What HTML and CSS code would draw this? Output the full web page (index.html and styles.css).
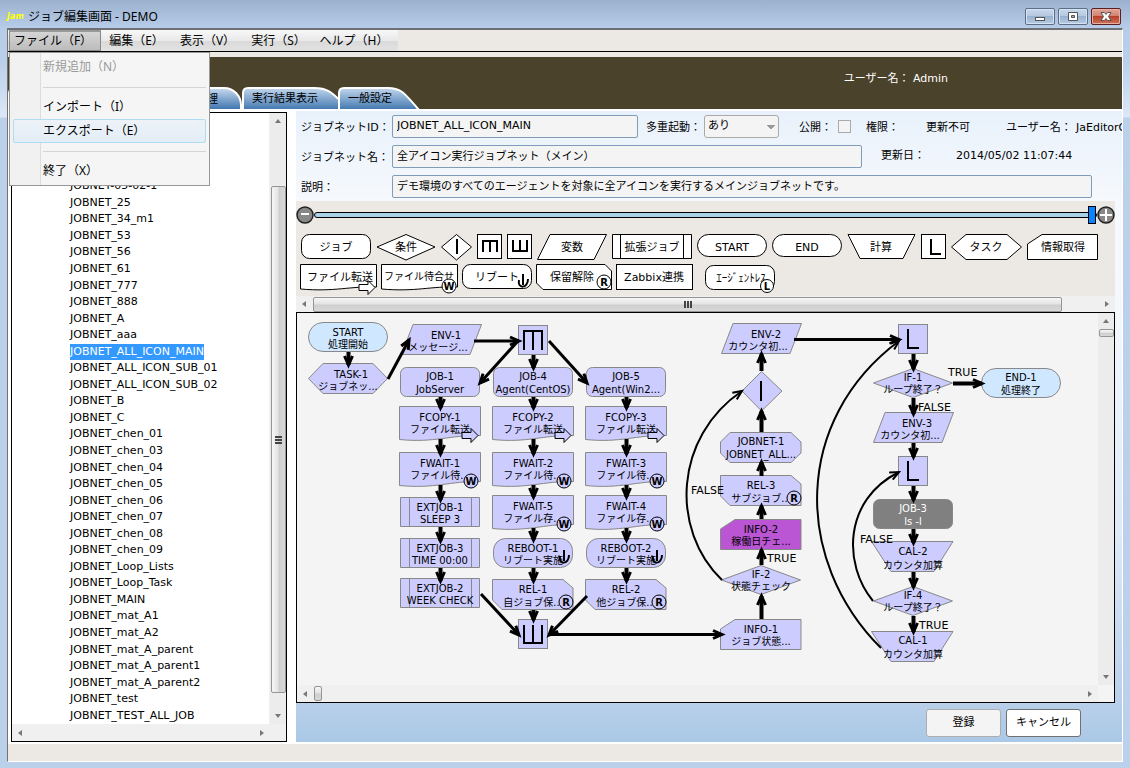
FILE: index.html
```html
<!DOCTYPE html>
<html lang="ja">
<head>
    <meta charset="UTF-8">
    <meta name="viewport" content="width=device-width, initial-scale=1.0">
    <title>ジョブ編集画面 - DEMO</title>
    <link rel="stylesheet" href="styles.css">
</head>
<body>
    <header class="titlebar">
        <span class="app-icon">Jam</span>
        <h1>ジョブ編集画面 - DEMO</h1>
        <div class="window-buttons">
            <button type="button" aria-label="最小化"><svg width="12" height="12"><rect x="1.5" y="6.5" width="9" height="3" fill="#fff" stroke="#555"/></svg></button>
            <button type="button" aria-label="最大化"><svg width="12" height="12"><path d="M1.5 1.5h9v8h-9zM4.5 4.5v2h3v-2z" fill="#fff" fill-rule="evenodd" stroke="#555"/></svg></button>
            <button type="button" class="close" aria-label="閉じる"><svg width="12" height="12"><path d="M1 1.500H4.500L6 3.500L7.500 1.500H11L8.500 5.500L11 9.500H7.500L6 7.500L4.500 9.500H1L3.500 5.500z" fill="#fff" stroke="#555"/></svg></button>
        </div>
    </header>

    <div class="client">
        <nav class="menubar">
            <div class="menu-items">
                <button type="button" class="open">ファイル（F）</button>
                <button type="button">編集（E）</button>
                <button type="button">表示（V）</button>
                <button type="button">実行（S）</button>
                <button type="button">ヘルプ（H）</button>
            </div>
            <div class="dropdown">
                <button type="button" disabled>新規追加（N）</button>
                <hr>
                <button type="button">インポート（I）</button>
                <button type="button" class="hover">エクスポート（E）</button>
                <hr>
                <button type="button">終了（X）</button>
            </div>
        </nav>

        <div class="banner">
            <div class="user">ユーザー名： Admin</div>
            <div class="tabs">
                <button type="button" class="tab tab-first">管理</button>
                <button type="button" class="tab">
                    <svg width="118" height="22">
                        <defs><linearGradient id="tab-fill" x2="0" y2="1"><stop offset="0" stop-color="#c3d7ed"/><stop offset="1" stop-color="#4076af"/></linearGradient></defs>
                        <path class="tab-shape" d="M1 23V6Q1 1 6 1H72C90 1 92 9 108 23"/>
                    </svg>
                    <span>実行結果表示</span>
                </button>
                <button type="button" class="tab tab-last">
                    <svg width="84" height="22"><path class="tab-shape" d="M1 23V6Q1 1 6 1H50C64 1 67 7 81 23"/></svg>
                    <span>一般設定</span>
                </button>
            </div>
        </div>

        <main class="workspace">
            <section class="tree">
                <div class="tree-body">
                    <ul>
                        <li>JOBNET-05-02-1</li>
                        <li>JOBNET_25</li>
                        <li>JOBNET_34_m1</li>
                        <li>JOBNET_53</li>
                        <li>JOBNET_56</li>
                        <li>JOBNET_61</li>
                        <li>JOBNET_777</li>
                        <li>JOBNET_888</li>
                        <li>JOBNET_A</li>
                        <li>JOBNET_aaa</li>
                        <li class="selected"><span>JOBNET_ALL_ICON_MAIN</span></li>
                        <li>JOBNET_ALL_ICON_SUB_01</li>
                        <li>JOBNET_ALL_ICON_SUB_02</li>
                        <li>JOBNET_B</li>
                        <li>JOBNET_C</li>
                        <li>JOBNET_chen_01</li>
                        <li>JOBNET_chen_03</li>
                        <li>JOBNET_chen_04</li>
                        <li>JOBNET_chen_05</li>
                        <li>JOBNET_chen_06</li>
                        <li>JOBNET_chen_07</li>
                        <li>JOBNET_chen_08</li>
                        <li>JOBNET_chen_09</li>
                        <li>JOBNET_Loop_Lists</li>
                        <li>JOBNET_Loop_Task</li>
                        <li>JOBNET_MAIN</li>
                        <li>JOBNET_mat_A1</li>
                        <li>JOBNET_mat_A2</li>
                        <li>JOBNET_mat_A_parent</li>
                        <li>JOBNET_mat_A_parent1</li>
                        <li>JOBNET_mat_A_parent2</li>
                        <li>JOBNET_test</li>
                        <li>JOBNET_TEST_ALL_JOB</li>
                    </ul>
                </div>
                <div class="vscroll tree-v"><i class="arrow up"></i><div class="thumb"><i class="grip"></i></div><i class="arrow down"></i></div>
                <div class="hscroll"><i class="arrow left"></i><i class="arrow right"></i></div>
            </section>

            <section class="editor">
                <form class="props">
                    <div class="row">
                        <label class="name" for="jobnet-id">ジョブネットID：</label>
                        <input type="text" id="jobnet-id" class="id-box" value="JOBNET_ALL_ICON_MAIN">
                        <label class="multi" for="multi">多重起動：</label>
                        <select id="multi"><option>あり</option></select>
                        <label class="public" for="public">公開：</label>
                        <input type="checkbox" id="public" disabled>
                        <span class="auth">権限：</span>
                        <span class="auth-value">更新不可</span>
                        <span class="owner">ユーザー名：</span>
                        <span class="owner-value">JaEditorG</span>
                    </div>
                    <div class="row">
                        <label class="name" for="jobnet-name">ジョブネット名：</label>
                        <input type="text" id="jobnet-name" class="name-box" value="全アイコン実行ジョブネット（メイン）">
                        <span class="updated">更新日：</span>
                        <span>2014/05/02 11:07:44</span>
                    </div>
                    <div class="row">
                        <label class="name" for="memo">説明：</label>
                        <input type="text" id="memo" class="memo-box" value="デモ環境のすべてのエージェントを対象に全アイコンを実行するメインジョブネットです。">
                    </div>
                </form>

                <div class="palette">
                    <div class="zoom">
                        <button type="button" aria-label="縮小"><svg width="18" height="18"><circle cx="9" cy="9" r="8" fill="#888" stroke="#222" stroke-width="1.500"/><path d="M5 8h8" stroke="#fff" stroke-width="2"/></svg></button>
                        <input type="range" min="0" max="100" value="100" aria-label="ズーム">
                        <button type="button" aria-label="拡大"><svg width="18" height="18"><circle cx="9" cy="9" r="8" fill="#888" stroke="#222" stroke-width="1.500"/><path d="M3 9h12M9 3v12" stroke="#fff" stroke-width="2"/></svg></button>
                    </div>
                    <div class="tools">
                        <button type="button"><svg width="70" height="26"><rect x=".5" y=".5" width="69" height="24" rx="8"/><text x="35" y="17">ジョブ</text></svg></button>
                        <button type="button"><svg width="60" height="27"><path d="M1 13L30 .5L59 13L30 26z"/><text x="30" y="17">条件</text></svg></button>
                        <button type="button" aria-label="合流"><svg width="31" height="27"><path d="M.5 13L15.500 .5L30.500 13L15.500 26z"/><path class="mark" d="M16 5v15"/></svg></button>
                        <button type="button" aria-label="並行開始"><svg width="25" height="26"><rect x=".5" y=".5" width="24" height="24"/><path class="mark" d="M6 18V7h14v11M13 7v11"/></svg></button>
                        <button type="button" aria-label="並行終了"><svg width="25" height="26"><rect x=".5" y=".5" width="24" height="24"/><path class="mark" d="M6 6v11h14V6M13 6v11"/></svg></button>
                        <button type="button"><svg width="70" height="27"><path d="M13 .5H69.500L57 25.500H.5z"/><text x="35" y="17">変数</text></svg></button>
                        <button type="button"><svg width="80" height="26"><path d="M.5 .5h79v24H.5zM8.500 .5v24M71.500 .5v24"/><text x="40" y="17">拡張ジョブ</text></svg></button>
                        <button type="button"><svg width="70" height="26"><rect x=".5" y=".5" width="69" height="22" rx="11"/><text x="35" y="17">START</text></svg></button>
                        <button type="button"><svg width="70" height="26"><rect x=".5" y=".5" width="69" height="22" rx="11"/><text x="35" y="17">END</text></svg></button>
                        <button type="button"><svg width="69" height="26"><path d="M1 .5H68L56 24.500H13z"/><text x="34" y="17">計算</text></svg></button>
                        <button type="button" aria-label="ループ"><svg width="25" height="26"><rect x=".5" y=".5" width="24" height="24"/><path class="mark" d="M10 5v15h10"/></svg></button>
                        <button type="button"><svg width="71" height="27"><path d="M.5 13L15 .5H56L70.500 13L56 25.500H15z"/><text x="35" y="17">タスク</text></svg></button>
                        <button type="button"><svg width="71" height="27"><path d="M15 .5H70.500V25.500H.5V10z"/><text x="36" y="17">情報取得</text></svg></button>
                    </div>
                    <div class="tools second">
                        <button type="button"><svg width="77" height="31"><path d="M.5 .5H76.500V23C50 22 35 28 .5 25z"/><text x="40" y="17">ファイル転送</text><use href="#b-arrow" x="58" y="16"/></svg></button>
                        <button type="button"><svg width="77" height="31"><path d="M.5 .5H76.500V23C50 22 35 28 .5 25z"/><text class="small" x="38" y="16">ファイル待合せ</text><use href="#b-w" x="68" y="22"/></svg></button>
                        <button type="button"><svg width="70" height="31"><rect x=".5" y=".5" width="69" height="24" rx="8"/><text x="35" y="17">リブート</text><use href="#b-power" x="61" y="18"/></svg></button>
                        <button type="button"><svg width="76" height="31"><path d="M.5 .5H69L75.500 7V25.500H7L.5 19z"/><text x="36" y="17">保留解除</text><use href="#b-r" x="68" y="18"/></svg></button>
                        <button type="button"><svg width="77" height="31"><rect x=".5" y=".5" width="76" height="25"/><text x="38" y="17">Zabbix連携</text></svg></button>
                        <button type="button" class="agentless"><svg width="71" height="31"><rect x=".5" y="1.500" width="69" height="24" rx="8"/><text x="36" y="18">ｴｰｼﾞｪﾝﾄﾚｽ</text><use href="#b-l" x="62" y="22"/></svg></button>
                    </div>
                    <div class="hscroll palette-h"><i class="arrow left"></i><div class="thumb"><i class="grip"></i></div><i class="arrow right"></i></div>
                </div>

                <div class="canvas">
                    <div class="canvas-view">
                    <svg class="flow" width="801" height="371" viewBox="297 313 801 371">
                        <defs>
                            <marker id="head" markerUnits="userSpaceOnUse" markerWidth="14" markerHeight="14" refX="10" refY="7" orient="auto"><path d="M1 3L10 7L1 11" fill="none" stroke="#000" stroke-width="3"/></marker>
                            <marker id="head-light" markerUnits="userSpaceOnUse" markerWidth="14" markerHeight="14" refX="10" refY="7" orient="auto"><path d="M1 3L10 7L1 11" fill="none" stroke="#000" stroke-width="2"/></marker>
                            <rect id="n-end" x=".5" y=".5" width="79" height="29" rx="14.500"/>
                            <rect id="n-job" x=".5" y=".5" width="79" height="29" rx="6"/>
                            <rect id="n-reboot" x=".5" y=".5" width="79" height="29" rx="12"/>
                            <rect id="n-box" x=".5" y=".5" width="29" height="29"/>
                            <path id="n-task" d="M.5 15.500L15 .5H65L79.500 15.500L65 30.500H15z"/>
                            <path id="n-env" d="M12 .5H80.500L69 30.500H.5z"/>
                            <path id="n-file" d="M.5 .5H81.500V29.500C50 29 36 37 .5 33.500z"/>
                            <path id="n-ext" d="M.5 .5h79v29H.5zM9.500 .5v29M71.500 .5v29"/>
                            <path id="n-rel" d="M.5 .5H71L81 9V30.500H10L.5 21z"/>
                            <path id="n-net" d="M10 .5H71L81 10V21L71 30.500H10L.5 21V10z"/>
                            <path id="n-info" d="M15 .5H81V30.500H.5V10z"/>
                            <path id="n-if" d="M.5 15L40 .5L79.500 15L40 29.500z"/>
                            <path id="n-cal" d="M.5 .5H82L63 30.500H20z"/>
                            <path id="b-arrow" class="badge" d="M1 4.500H10V.5L17 7.500L10 14.500V10.500H1z"/>
                            <g id="b-w" class="badge"><circle r="7"/><text y="4">W</text></g>
                            <g id="b-r" class="badge"><circle r="7"/><text y="4">R</text></g>
                            <g id="b-l" class="badge"><circle r="6.500"/><text y="4">L</text></g>
                            <path id="b-power" class="power" d="M-4 -2C-6 7 5 7 5 -3M0 -8V3"/>
                        </defs>

                        <g fill="#ccf" stroke="#888">
                            <g fill="#d0e8ff"><use href="#n-end" x="308" y="322"/><use href="#n-end" x="981" y="368"/></g>
                            <use href="#n-task" x="308" y="363"/>
                            <use href="#n-env" x="401" y="324"/><use href="#n-env" x="721" y="323"/><use href="#n-env" x="873" y="412"/>
                            <use href="#n-box" x="518" y="325"/><use href="#n-box" x="518" y="619"/><use href="#n-box" x="898" y="324"/><use href="#n-box" x="898" y="456"/>
                            <use href="#n-job" x="400" y="367"/><use href="#n-job" x="493" y="367"/><use href="#n-job" x="586" y="367"/>
                            <use href="#n-file" x="399" y="406"/><use href="#n-file" x="492" y="406"/><use href="#n-file" x="585" y="406"/>
                            <use href="#n-file" x="399" y="452"/><use href="#n-file" x="492" y="452"/><use href="#n-file" x="585" y="452"/>
                            <use href="#n-file" x="492" y="495"/><use href="#n-file" x="585" y="495"/>
                            <use href="#n-ext" x="400" y="497"/><use href="#n-ext" x="400" y="538"/><use href="#n-ext" x="400" y="578"/>
                            <use href="#n-reboot" x="493" y="538"/><use href="#n-reboot" x="586" y="538"/>
                            <use href="#n-rel" x="492" y="579"/><use href="#n-rel" x="585" y="579"/><use href="#n-rel" x="720" y="475"/>
                            <path d="M761.500 371.500L782 391L761.500 411L742 391z"/>
                            <use href="#n-net" x="720" y="432"/>
                            <use href="#n-info" x="720" y="519" fill="#ba55d3"/><use href="#n-info" x="720" y="619"/>
                            <use href="#n-if" x="721" y="565"/><use href="#n-if" x="873" y="368"/><use href="#n-if" x="873" y="586"/>
                            <use href="#n-job" x="873" y="499" fill="#808080"/>
                            <use href="#n-cal" x="871" y="541"/><use href="#n-cal" x="871" y="631"/>
                        </g>

                        <g class="glyph">
                            <path d="M524 350V331H542V350M533 331V350"/>
                            <path d="M524 625V643H542V625M533 625V643"/>
                            <path d="M761 381V401"/>
                            <path d="M908 329V348H919"/>
                            <path d="M908 461V480H919"/>
                        </g>

                        <g class="edges">
                            <path d="M388 379L409 340"/>
                            <path d="M474 341H519"/>
                            <path d="M518 341L480 383"/>
                            <path d="M549 341L587 383"/>
                            <path d="M481 594L519 635"/>
                            <path d="M587 596L549 635"/>
                            <path d="M549 634.500H722"/>
                            <path d="M794 339.500H899"/>
                            <g class="steps">
                                <path d="M348.500 352V365"/>
                                <path d="M533.500 355V368"/>
                                <path d="M440.500 397V408"/><path d="M533.500 397V408"/><path d="M626.500 397V408"/>
                                <path d="M440.500 439V454"/><path d="M533.500 439V454"/><path d="M626.500 439V454"/>
                                <path d="M440.500 485V500"/><path d="M533.500 485V497"/><path d="M626.500 485V497"/>
                                <path d="M440.500 527V541"/><path d="M533.500 528V540"/><path d="M626.500 528V540"/>
                                <path d="M440.500 568V581"/><path d="M533.500 568V581"/><path d="M626.500 568V581"/>
                                <path d="M533.500 610V620"/>
                                <path d="M761.500 619V596"/><path d="M761.500 565V550"/><path d="M761.500 519V506"/><path d="M761.500 476V462"/><path d="M761.500 432V411"/><path d="M761.500 371V354"/>
                                <path d="M913.500 354V369"/><path d="M913.500 398V414"/><path d="M913.500 443V457"/><path d="M913.500 486V500"/><path d="M913.500 529V543"/><path d="M913.500 572V587"/><path d="M913.500 616V632"/>
                                <path d="M953 383.500H982"/>
                            </g>
                            <g class="curve">
                                <path d="M722 580C670 530 674 437 742 391"/>
                                <path d="M881 648C793 560 793 420 899 341"/>
                                <path d="M873 601C843 565 843 500 899 472"/>
                            </g>
                        </g>

                        <g class="labels">
                            <text x="348" y="336">START</text><text x="348" y="348">処理開始</text>
                            <text x="351" y="378">TASK-1</text><text x="348" y="390">ジョブネッ...</text>
                            <text x="446" y="339">ENV-1</text><text x="438" y="351">メッセージ...</text>
                            <text x="440" y="380">JOB-1</text><text x="440" y="393">JobServer</text>
                            <text x="533" y="380">JOB-4</text><text x="533" y="393">Agent(CentOS)</text>
                            <text x="626" y="380">JOB-5</text><text x="626" y="393">Agent(Win2...</text>
                            <text x="440" y="421">FCOPY-1</text><text x="440" y="433">ファイル転送</text>
                            <text x="533" y="421">FCOPY-2</text><text x="533" y="433">ファイル転送</text>
                            <text x="626" y="421">FCOPY-3</text><text x="626" y="433">ファイル転送</text>
                            <text x="440" y="467">FWAIT-1</text><text x="440" y="479">ファイル待...</text>
                            <text x="533" y="467">FWAIT-2</text><text x="533" y="479">ファイル待...</text>
                            <text x="626" y="467">FWAIT-3</text><text x="626" y="479">ファイル待...</text>
                            <text x="533" y="510">FWAIT-5</text><text x="533" y="522">ファイル存...</text>
                            <text x="626" y="510">FWAIT-4</text><text x="626" y="522">ファイル存...</text>
                            <text x="440" y="511">EXTJOB-1</text><text x="440" y="523">SLEEP 3</text>
                            <text x="440" y="552">EXTJOB-3</text><text x="440" y="564">TIME 00:00</text>
                            <text x="440" y="592">EXTJOB-2</text><text x="440" y="604">WEEK CHECK</text>
                            <text x="533" y="552">REBOOT-1</text><text x="533" y="564">リブート実施</text>
                            <text x="626" y="552">REBOOT-2</text><text x="626" y="564">リブート実施</text>
                            <text x="533" y="593">REL-1</text><text x="533" y="606">自ジョブ保...</text>
                            <text x="626" y="593">REL-2</text><text x="626" y="606">他ジョブ保...</text>
                            <text x="766" y="338">ENV-2</text><text x="758" y="350">カウンタ初...</text>
                            <text x="761" y="445">JOBNET-1</text><text x="761" y="458">JOBNET_ALL...</text>
                            <text x="761" y="489">REL-3</text><text x="761" y="502">サブジョブ...</text>
                            <text x="761" y="533">INFO-2</text><text x="761" y="545">稼働日チェ...</text>
                            <text x="761" y="578">IF-2</text><text x="761" y="590">状態チェック</text>
                            <text x="761" y="633">INFO-1</text><text x="761" y="645">ジョブ状態...</text>
                            <text x="913" y="381">IF-1</text><text x="913" y="393">ループ終了？</text>
                            <text x="1021" y="381">END-1</text><text x="1021" y="394">処理終了</text>
                            <text x="917" y="427">ENV-3</text><text x="910" y="439">カウンタ初...</text>
                            <g fill="#fff"><text x="913" y="512">JOB-3</text><text x="913" y="525">ls -l</text></g>
                            <text x="913" y="555">CAL-2</text><text x="913" y="569">カウンタ加算</text>
                            <text x="913" y="599">IF-4</text><text x="913" y="611">ループ終了？</text>
                            <text x="913" y="644">CAL-1</text><text x="913" y="658">カウンタ加算</text>
                        </g>

                        <g class="branches">
                            <text x="948" y="376">TRUE</text>
                            <text x="918" y="411">FALSE</text>
                            <text x="691" y="494">FALSE</text>
                            <text x="767" y="562">TRUE</text>
                            <text x="860" y="543">FALSE</text>
                            <text x="919" y="629">TRUE</text>
                        </g>

                        <g fill="#ccf">
                            <use href="#b-arrow" x="461" y="428"/><use href="#b-arrow" x="554" y="428"/><use href="#b-arrow" x="647" y="428"/>
                            <use href="#b-w" x="471" y="481"/><use href="#b-w" x="564" y="481"/><use href="#b-w" x="657" y="481"/>
                            <use href="#b-w" x="564" y="524"/><use href="#b-w" x="657" y="524"/>
                            <use href="#b-power" x="564" y="558"/><use href="#b-power" x="657" y="558"/>
                            <use href="#b-r" x="566" y="602"/><use href="#b-r" x="659" y="602"/><use href="#b-r" x="794" y="498"/>
                        </g>
                    </svg>
                    </div>
                    <div class="vscroll canvas-v"><i class="arrow up"></i><div class="thumb"></div><i class="arrow down"></i></div>
                    <div class="hscroll canvas-h"><i class="arrow left"></i><div class="thumb"></div><i class="arrow right"></i></div>
                </div>

                <div class="actions">
                    <button type="button" class="save">登録</button>
                    <button type="button">キャンセル</button>
                </div>
            </section>
        </main>

        <footer class="statusbar"></footer>
    </div>
</body>
</html>
```
FILE: styles.css
```css
* { box-sizing: border-box; }
body { display: flex; flex-direction: column; height: 100vh; margin: 0; padding: 0 7px 6px; overflow: hidden; font: 11px/14px "DejaVu Sans", "Noto Sans CJK JP", sans-serif; color: #000; background: linear-gradient(#9bb1cd 0, #b6cce8 28px, #b9cfea 60px, #dce8f6 117px, #bbd0e9 118px, #bbd0eb); }
button { padding: 0; border: 0; background: none; font: inherit; color: inherit; }
svg { display: block; }

/* title bar */
.titlebar { display: flex; align-items: center; height: 28px; padding: 5px 2px 0 0; flex: none; }
.titlebar h1 { flex: 1; margin: 0; font: 12px/18px "Noto Sans", "Noto Sans CJK JP", sans-serif; }
.app-icon { width: 21px; font-size: 8px; font-style: italic; font-weight: bold; color: #ff0; }
.window-buttons { display: flex; gap: 3px; }
.window-buttons button { display: flex; align-items: center; justify-content: center; width: 30px; height: 17px; border: 1px solid #5b7088; border-radius: 2px; background: linear-gradient(#c9d8ea 0, #b5c9e0 45%, #98b1cf 50%, #b7cce4); box-shadow: inset 0 0 0 1px #d6e3f2; }
.window-buttons .close { border-color: #5a1f1f; background: linear-gradient(#e3a598 0, #d38370 45%, #b8412a 50%, #cf7356); box-shadow: inset 0 0 0 1px #e6b0a2; }

.client { display: flex; flex: 1; flex-direction: column; min-height: 0; border: 1px solid #fff; border-top: 2px solid #6c7076; border-left-color: #77716a; background: #ece9e4; }

/* menu */
.menubar { position: relative; height: 22px; margin-bottom: 5px; border-bottom: 1px solid #000; flex: none; font: 12px/18px "Noto Sans", "Noto Sans CJK JP", sans-serif; }
.menu-items { display: flex; width: 390px; height: 21px; padding-left: 1px; background: linear-gradient(#f8f8f8, #e9e9e9 50%, #dadada 55%, #e2e2e2); }
.menu-items button { width: 71px; text-align: center; }
.menu-items button:last-child { width: 80px; }
.menu-items .open { width: 92px; padding-right: 4px; border: 1px solid #888; border-top: 2px solid #999; background: linear-gradient(#d5d5d5, #bcbcbc); }
.dropdown { position: absolute; z-index: 5; top: 22px; left: 1px; width: 201px; padding: 2px 3px; border: 1px solid #979797; background: linear-gradient(90deg, #f1f1f1 30px, #ddd 30px, #ddd 31px, #f5f5f5 31px); }
.dropdown button { display: block; width: 100%; height: 24px; padding-left: 29px; border: 1px solid transparent; border-radius: 2px; text-align: left; }
.dropdown button:disabled { color: #999; }
.dropdown .hover { border-color: #aedcf2; background: linear-gradient(#eef2f8, #e3edf6); }
.dropdown hr { height: 1px; margin: 8px 0 7px 30px; border: 0; background: #d5d5d5; }

/* banner and tabs */
.banner { display: flex; flex-direction: column; justify-content: space-between; height: 52px; padding-top: 15px; background: #4b422b; color: #fff; flex: none; }
.user { width: 940px; text-align: right; }
.tabs { display: flex; height: 22px; color: #000; }
.tab { position: relative; width: 96px; padding-top: 2px; text-align: left; }
.tab svg { position: absolute; top: 0; left: 0; }
.tab span { position: relative; padding-left: 10px; }
.tab-first { width: 234px; padding-right: 22px; border: 2px solid #fff; border-bottom: 0; border-radius: 6px 18px 0 0; text-align: right; background: linear-gradient(#c3d7ed, #4076af); }
.tab-last { width: 84px; }
.tab-shape { fill: url(#tab-fill); stroke: #fff; stroke-width: 2; }

.workspace { display: flex; flex: 1; gap: 9px; min-height: 0; padding: 2px 0 2px 3px; background: #fff; }

/* jobnet tree */
.tree { display: grid; grid-template: 1fr 17px / 1fr 16px; flex: none; width: 276px; margin-top: 1px; border: 1px solid #000; background: linear-gradient(#fff, #fff) 0 0 / 257px 100% no-repeat, #f0f0f0; }
.tree-body { display: flex; min-height: 0; padding-top: 65px; }
.tree ul { display: flex; flex: 1; flex-direction: column; margin: 0; padding: 0 0 0 58px; list-style: none; }
.tree li { display: flex; flex: 1; align-items: center; white-space: nowrap; }
.selected span { padding: 1px 0; background: #39f; color: #fff; }

/* scroll bars */
.vscroll, .hscroll { display: flex; align-items: center; justify-content: space-between; background: #ececec; }
.vscroll { flex-direction: column; padding: 6px 0; }
.hscroll { padding: 0 6px; background: #f0f0f0; }
.arrow { width: 0; height: 0; border: 3px solid transparent; }
.up { border-top: 0; border-bottom: 4px solid #777; }
.down { border-bottom: 0; border-top: 4px solid #777; }
.left { border-left: 0; border-right: 4px solid #777; }
.right { border-right: 0; border-left: 4px solid #777; }
.thumb { display: flex; align-items: center; justify-content: center; border: 1px solid #959595; border-radius: 2px; background: linear-gradient(#f6f6f6, #e4e4e4 45%, #cfcfcf 55%, #d8d8d8); }
.grip { width: 8px; height: 7px; background: repeating-linear-gradient(90deg, #444 0, #444 2px, transparent 2px, transparent 3px); }
.tree-v .thumb { flex: 1; width: 15px; margin: 63px 0 21px; background: linear-gradient(90deg, #f6f6f6, #e4e4e4 45%, #cfcfcf 55%, #d8d8d8); }
.tree-v .grip { width: 7px; height: 8px; background: repeating-linear-gradient(#444 0, #444 2px, transparent 2px, transparent 3px); }
.palette-h .thumb { flex: 1; height: 15px; margin: 0 43px 0 7px; }

/* properties */
.editor { display: flex; flex: 1; flex-direction: column; min-width: 0; background: linear-gradient(#e8f1fb, #f6f9fd 90px, #f4f8fd 200px, #dfeaf8 420px, #b9cfea 592px, #aac9e6); }
.props { height: 90px; flex: none; overflow: hidden; }
.row { display: flex; align-items: center; height: 30px; padding-left: 5px; white-space: nowrap; }
.row > * { flex: none; }
.row label, .row:first-child span { padding-top: 3px; }
.name { width: 91px; }
.row input[type="text"] { height: 23px; padding: 0 4px 2px; border: 1px solid #7f9db9; border-radius: 2px; background: #f4f4f4; font: inherit; }
.id-box { width: 246px; }
.name-box { width: 470px; }
.memo-box { width: 700px; }
.multi { width: 66px; padding-left: 8px; }
.row select { width: 75px; height: 23px; padding: 0 3px; border: 1px solid #aaa; border-radius: 3px; appearance: none; background: linear-gradient(#999, #999) 62px 9px / 8px 1px no-repeat, linear-gradient(#999, #999) 63px 10px / 6px 1px no-repeat, linear-gradient(#999, #999) 64px 11px / 4px 1px no-repeat, linear-gradient(#999, #999) 65px 12px / 2px 1px no-repeat, #f4f4f4; font: inherit; }
.public { width: 59px; padding-left: 20px; }
.row input[type="checkbox"] { width: 13px; height: 13px; margin: 0; appearance: none; border: 1px solid #aaa; background: #f4f4f4; }
.auth { width: 75px; padding-left: 15px; }
.auth-value { width: 80px; }
.owner { width: 70px; }
.updated { width: 94px; padding-left: 19px; }

/* icon palette */
.palette { display: flex; flex-direction: column; height: 111px; margin-right: 7px; padding-top: 5px; background: #ece9e4; flex: none; overflow: hidden; }
.zoom { display: flex; align-items: center; height: 18px; margin-bottom: 10px; }
.zoom input { flex: 1; height: 18px; margin: 0; appearance: none; background: none; }
.zoom input::-webkit-slider-runnable-track { height: 6px; border: 1px solid #000; border-radius: 3px; background: #a9d1e8; }
.zoom input::-webkit-slider-thumb { width: 8px; height: 18px; margin-top: -7px; appearance: none; border: 1px solid #000; background: #0a84ff; }
.tools { display: flex; gap: 5px; height: 26px; margin-bottom: 4px; padding-left: 5px; }
.tools.second { gap: 4px; height: 31px; margin-bottom: 1px; padding-left: 4px; }
.tools button { display: flex; align-items: flex-start; }
.tools .agentless { margin-left: 8px; }
.tools svg { overflow: visible; fill: #fff; stroke: #000; }
.tools text { fill: #000; stroke: none; text-anchor: middle; }
.tools .small { font-size: 10px; }
.tools .mark { fill: none; stroke-width: 2; }
.palette-h { height: 16px; }

/* flow chart */
.canvas { display: grid; grid-template: 1fr 17px / 1fr 16px; flex: 1; min-height: 0; margin-right: 7px; border: 1px solid #000; background: #f4f4f4; }
.canvas-view { min-width: 0; min-height: 0; overflow: hidden; }
.flow text { stroke: none; }
.labels { font-size: 10px; text-anchor: middle; }
.glyph { fill: none; stroke: #000; stroke-width: 2; }
.edges { fill: none; stroke: #000; stroke-width: 3; }
.edges path { marker-end: url(#head); }
.edges .steps { stroke-width: 4; }
.edges .curve { stroke-width: 2; }
.edges .curve path { marker-end: url(#head-light); }
.badge { stroke: #000; stroke-width: 1; }
.badge text { fill: #000; stroke: none; font-size: 10px; font-weight: bold; text-anchor: middle; }
.power { fill: none; stroke: #000; stroke-width: 2; }
.canvas-v { justify-content: flex-start; }
.canvas-v .thumb { width: 15px; height: 8px; margin: 6px 0 auto; }
.canvas-h .thumb { width: 8px; height: 15px; margin: 0 auto 0 7px; }

.actions { display: flex; justify-content: flex-end; gap: 5px; height: 39px; padding: 6px 41px 5px 0; flex: none; }
.actions button { width: 75px; border: 1px solid #707070; border-radius: 3px; background: #fff; }
.actions .save { border-color: #adadad; background: #f4f4f4; }
.statusbar { height: 17px; flex: none; }
```
